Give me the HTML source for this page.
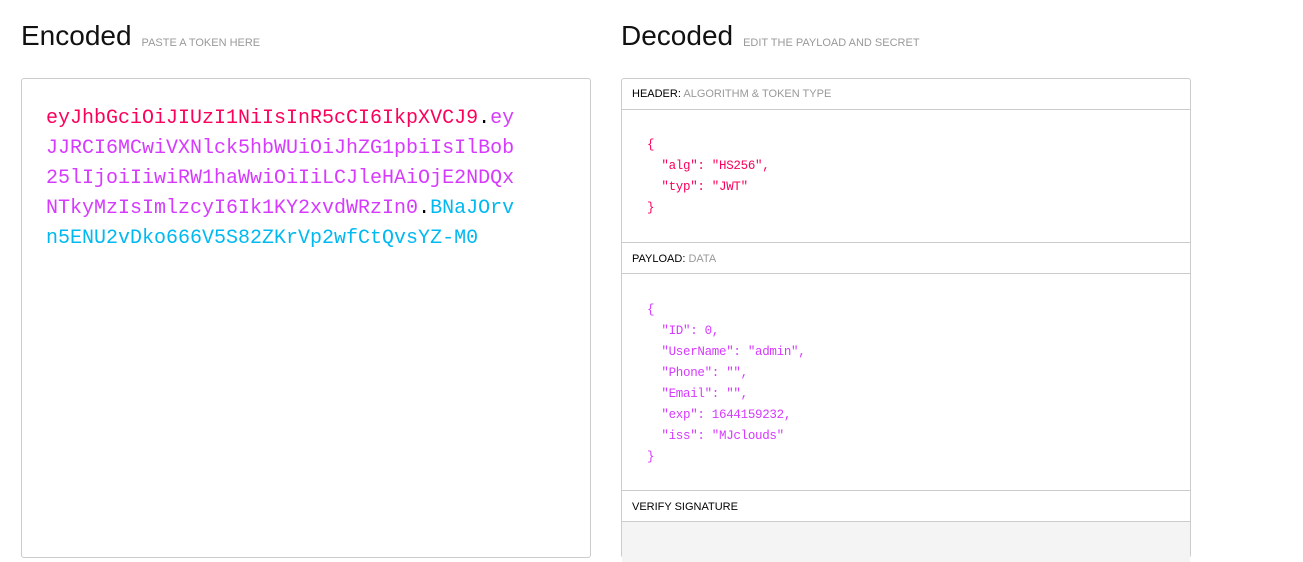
<!DOCTYPE html>
<html><head><meta charset="utf-8"><style>
*{margin:0;padding:0;box-sizing:border-box}
body{width:1303px;height:543px;background:#fff;position:relative;overflow:hidden;font-family:"Liberation Sans",sans-serif}
.t{position:absolute;top:20px;font-size:28px;color:#111;white-space:nowrap}
.t span{font-size:11px;color:#999;margin-left:10px;vertical-align:-1px}
.enc{position:absolute;left:21px;top:78px;width:570px;height:480px;border:1px solid #ccc;border-radius:3px}
.code{position:absolute;left:46px;top:104px;font-family:"Liberation Mono",monospace;font-size:20px;line-height:30px;white-space:pre}
.r{color:#fb015b}.p{color:#d63aff}.b{color:#00b9f1}.k{color:#000}
.dec{position:absolute;left:621px;top:78px;width:570px;height:480px;border:1px solid #ccc;border-radius:3px}
.h{position:absolute;left:0;width:568px;height:32px;border-bottom:1px solid #ccc;border-top:1px solid #ccc;font-size:11px;color:#000;padding:10px 0 0 10px}
.h span{color:#999}
.j{position:absolute;left:25px;font-family:"Liberation Mono",monospace;font-size:12.5px;line-height:21px;white-space:pre;letter-spacing:-0.3px}
</style></head><body>
<div class="t" style="left:21px">Encoded<span>PASTE A TOKEN HERE</span></div>
<div class="t" style="left:621px">Decoded<span>EDIT THE PAYLOAD AND SECRET</span></div>
<div class="enc"></div>
<div class="code"><span class="r">eyJhbGciOiJIUzI1NiIsInR5cCI6IkpXVCJ9</span><span class="k">.</span><span class="p">ey
JJRCI6MCwiVXNlck5hbWUiOiJhZG1pbiIsIlBob
25lIjoiIiwiRW1haWwiOiIiLCJleHAiOjE2NDQx
NTkyMzIsImlzcyI6Ik1KY2xvdWRzIn0</span><span class="k">.</span><span class="b">BNaJOrv
n5ENU2vDko666V5S82ZKrVp2wfCtQvsYZ-M0</span></div>
<div class="dec">
<div class="h" style="top:-1px;border-top:none">HEADER: <span>ALGORITHM &amp; TOKEN TYPE</span></div>
<div class="j r" style="top:56px">{
  "alg": "HS256",
  "typ": "JWT"
}</div>
<div class="h" style="top:163px">PAYLOAD: <span>DATA</span></div>
<div class="j p" style="top:221px">{
  "ID": 0,
  "UserName": "admin",
  "Phone": "",
  "Email": "",
  "exp": 1644159232,
  "iss": "MJclouds"
}</div>
<div class="h" style="top:411px">VERIFY SIGNATURE</div>
<div style="position:absolute;left:0;top:443px;width:568px;height:40px;background:#f4f4f4"></div>
</div>
</body></html>
